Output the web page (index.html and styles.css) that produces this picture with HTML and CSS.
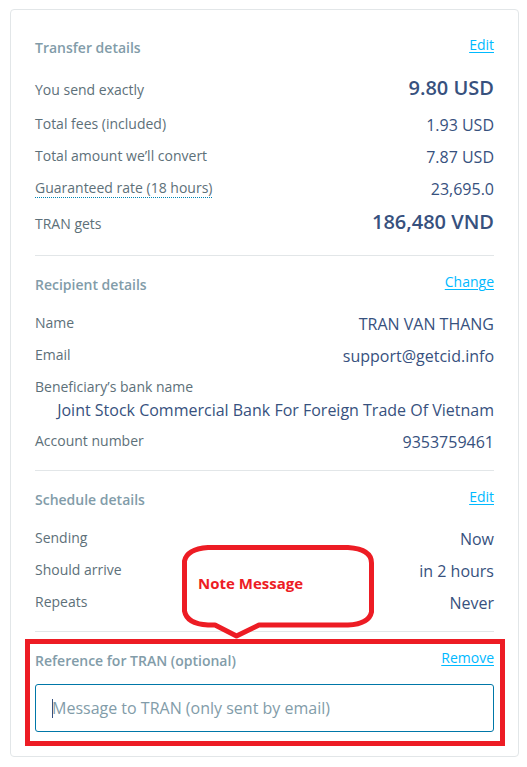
FILE: index.html
```html
<!DOCTYPE html>
<html lang="en">
<head>
<meta charset="utf-8">
<meta name="viewport" content="width=device-width, initial-scale=1">
<title>Review transfer</title>
<link rel="stylesheet" href="styles.css">
</head>
<body>
<main class="card">
  <section class="section">
    <header class="head"><h2 class="title">Transfer details</h2><a class="link" href="#">Edit</a></header>
    <dl class="rows">
      <div class="row row-large"><dt>You send exactly</dt><dd>9.80 USD</dd></div>
      <div class="row"><dt>Total fees (included)</dt><dd>1.93 USD</dd></div>
      <div class="row"><dt>Total amount we’ll convert</dt><dd>7.87 USD</dd></div>
      <div class="row"><dt><span class="hint">Guaranteed rate (18 hours)</span></dt><dd>23,695.0</dd></div>
      <div class="row row-large"><dt>TRAN gets</dt><dd>186,480 VND</dd></div>
    </dl>
  </section>
  <section class="section">
    <header class="head"><h2 class="title">Recipient details</h2><a class="link" href="#">Change</a></header>
    <dl class="rows">
      <div class="row"><dt>Name</dt><dd>TRAN VAN THANG</dd></div>
      <div class="row"><dt>Email</dt><dd>support@getcid.info</dd></div>
      <div class="row"><dt>Beneficiary’s bank name</dt><dd>Joint Stock Commercial Bank For Foreign Trade Of Vietnam</dd></div>
      <div class="row"><dt>Account number</dt><dd>9353759461</dd></div>
    </dl>
  </section>
  <section class="section">
    <header class="head"><h2 class="title">Schedule details</h2><a class="link" href="#">Edit</a></header>
    <dl class="rows">
      <div class="row"><dt>Sending</dt><dd>Now</dd></div>
      <div class="row"><dt>Should arrive</dt><dd>in 2 hours</dd></div>
      <div class="row"><dt>Repeats</dt><dd>Never</dd></div>
    </dl>
  </section>
  <section class="section reference">
    <header class="head"><label class="title" for="message">Reference for TRAN (optional)</label><a class="link" href="#">Remove</a></header>
    <div class="field">
      <input class="input" id="message" type="text" placeholder="Message to TRAN (only sent by email)">
      <span class="caret"></span>
    </div>
    <div class="callout">
      <svg class="bubble" viewBox="0 0 192 94" width="192" height="94" aria-hidden="true">
        <path d="M26 2.5H166Q189.500 4 189.500 18V67Q187 79 166 80H77L54.500 91 33 80H26Q5 79 2.500 66V16Q5 4 26 2.500Z" fill="#fff" stroke="#ed1c24" stroke-width="5" stroke-linejoin="round"/>
      </svg>
      <span class="note">Note Message</span>
    </div>
  </section>
</main>
</body>
</html>
```
FILE: styles.css
```css
* {
  box-sizing: border-box;
}

body {
  margin: 0;
  padding: 9px 8px 10px 10px;
  background: #fff;
  color: #37517e;
  font-family: "Open Sans", "Noto Sans", sans-serif;
  font-size: 16px;
  line-height: 24px;
}

.card {
  padding: 25px 24px 24px;
  border: 1px solid #e2e6e8;
  border-radius: 4px;
}

.section + .section {
  margin-top: 16px;
  padding-top: 16px;
  border-top: 1px solid #e2e6e8;
}

.head {
  display: flex;
  justify-content: space-between;
  align-items: flex-start;
  height: 24px;
}

.title {
  margin: 0;
  align-self: flex-end;
  color: #829ca9;
  font-size: 14px;
  font-weight: 600;
  line-height: 22px;
}

.link {
  color: #00b9ff;
  font-size: 14px;
  line-height: 20px;
  text-underline-offset: 2px;
}

.rows {
  display: flex;
  flex-direction: column;
  gap: 8px;
  margin: 16px 0 0;
}

.row {
  display: flex;
  flex-wrap: wrap;
  justify-content: space-between;
}

.row dt {
  color: #5d7079;
  font-size: 14px;
  line-height: 22px;
}

.row dd {
  margin: 0 0 0 auto;
  text-align: right;
}

.row-large dt {
  line-height: 30px;
}

.row-large dd {
  font-size: 20px;
  font-weight: 600;
  line-height: 26px;
}

.hint {
  border-bottom: 1px dotted #0084b3;
}

.reference {
  position: relative;
}

.reference::after {
  content: "";
  position: absolute;
  inset: 7px -11px -14px -10px;
  border: 5px solid #ed1c24;
  pointer-events: none;
}

.field {
  position: relative;
  margin-top: 12px;
}

.input {
  display: block;
  width: 100%;
  height: 48px;
  padding: 0 16px;
  border: 1px solid #0077a8;
  border-radius: 3px;
  background: #fff;
  color: #37517e;
  font: inherit;
}

.input::placeholder {
  color: #829ca9;
  opacity: 1;
}

.caret {
  position: absolute;
  top: 15px;
  left: 17px;
  width: 1px;
  height: 19px;
  background: #37517e;
}

.callout {
  position: absolute;
  bottom: 93px;
  left: 147px;
}

.bubble {
  display: block;
}

.note {
  position: absolute;
  top: 26px;
  left: 16px;
  color: #ed1c24;
  font-size: 15px;
  font-weight: 700;
  white-space: nowrap;
}
```
